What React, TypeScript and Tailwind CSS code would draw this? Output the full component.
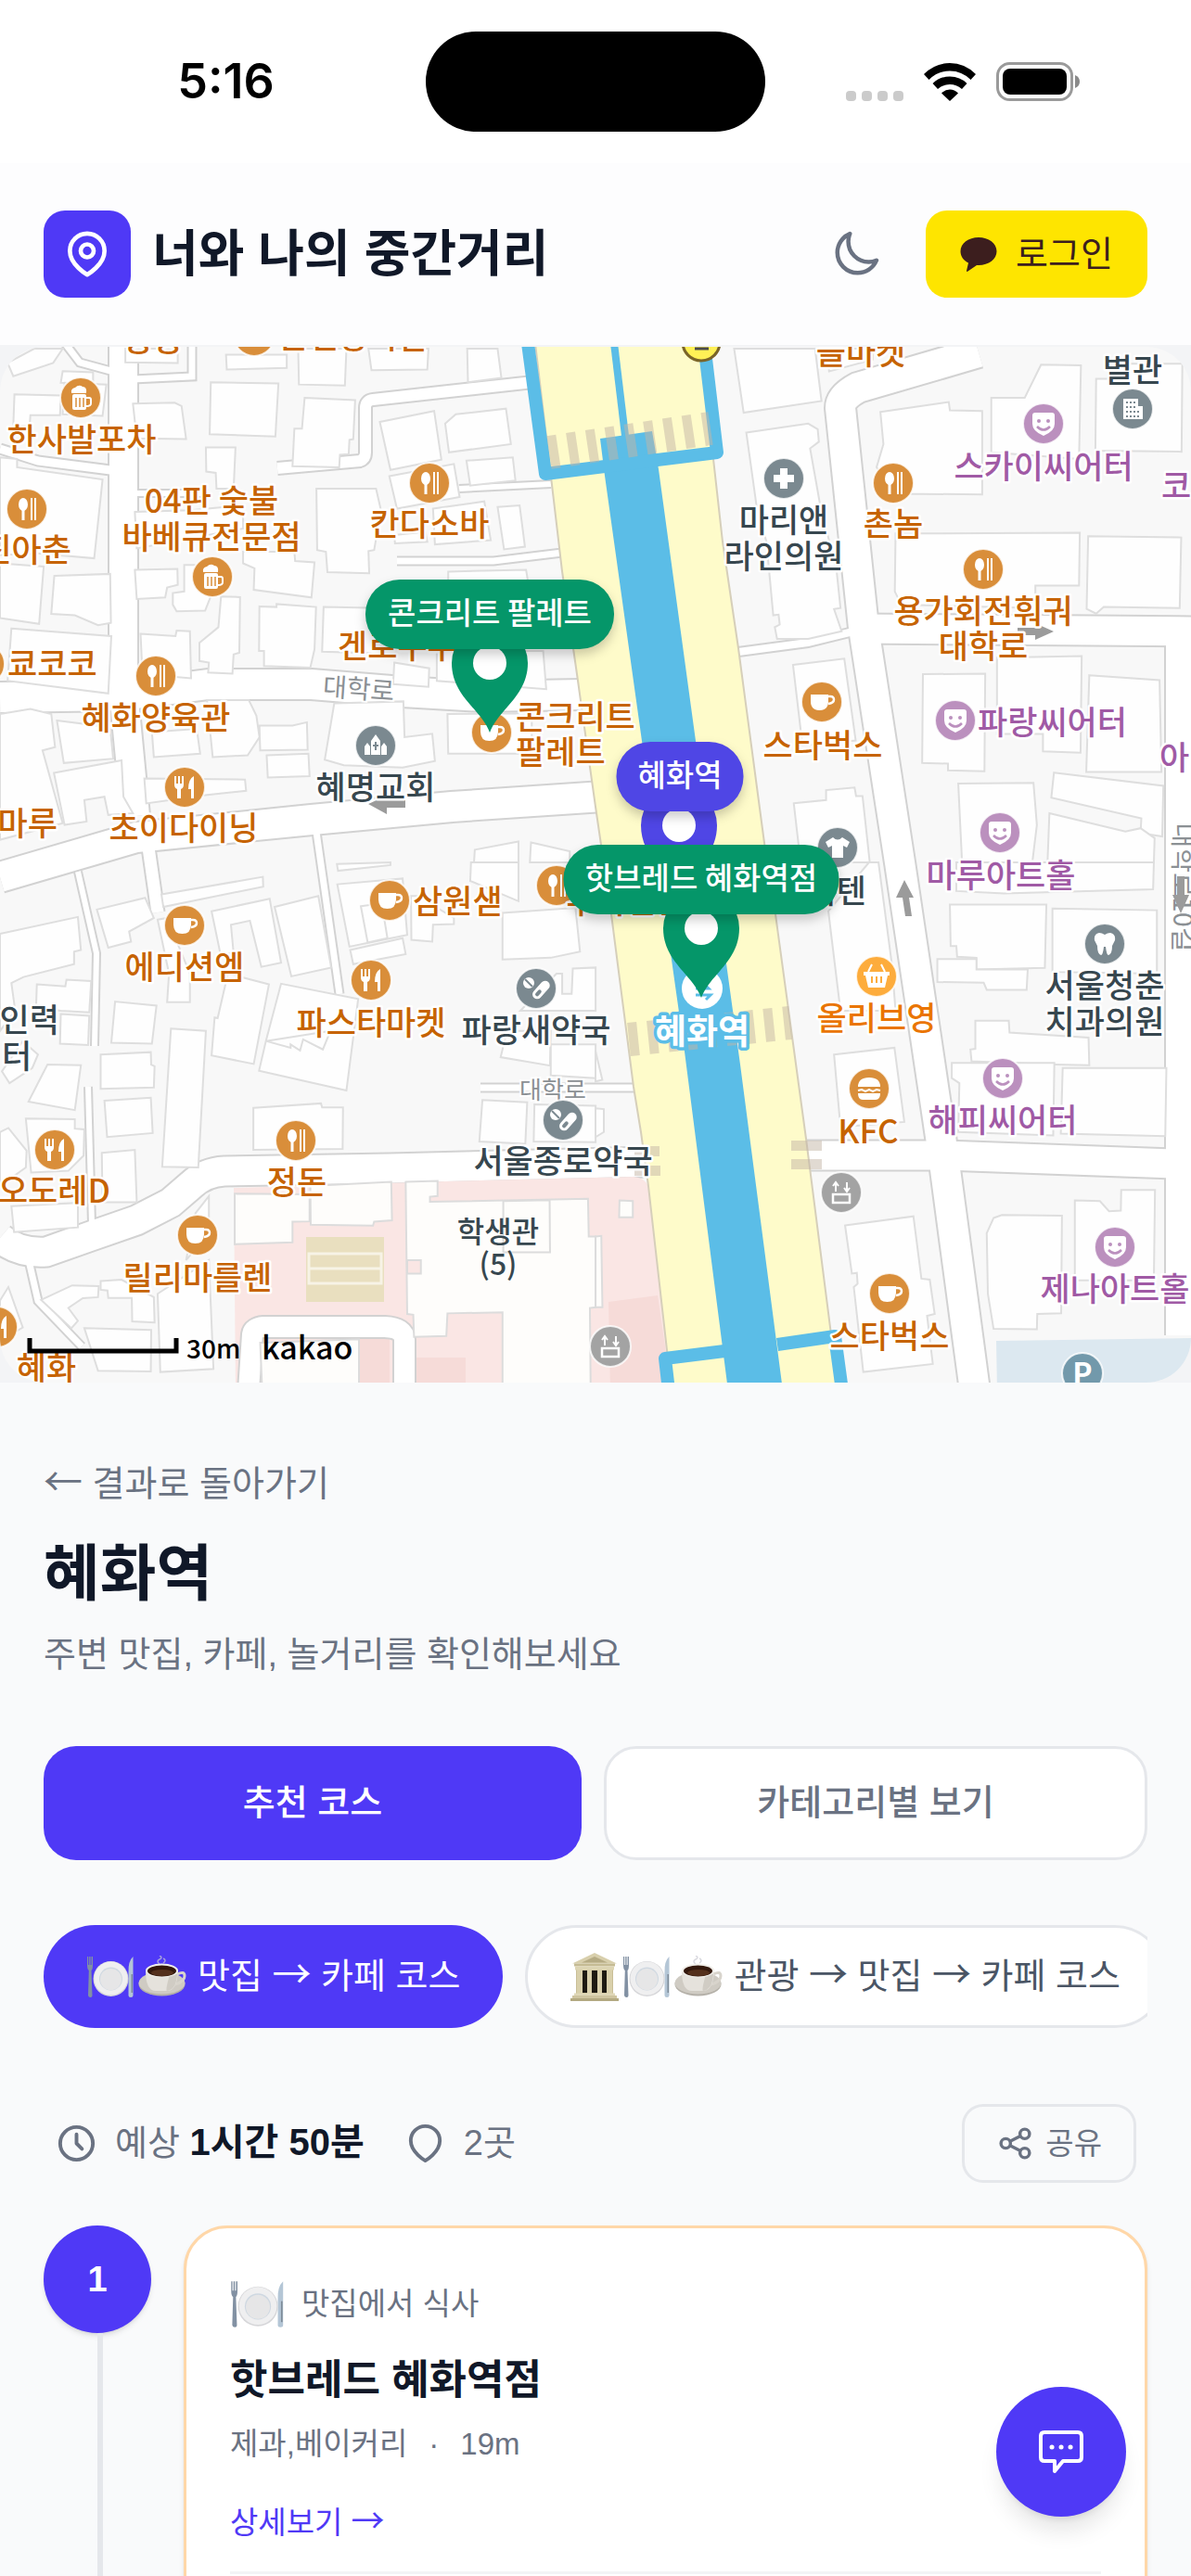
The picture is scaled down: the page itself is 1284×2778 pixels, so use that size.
import { useState } from "react"
import type { ReactNode } from "react"

type PoiKind =
  | "spoon"
  | "fork"
  | "beer"
  | "cup"
  | "mask"
  | "church"
  | "building"
  | "cross"
  | "shirt"
  | "pill"
  | "tooth"
  | "basket"
  | "burger"
  | "parking"
  | "lift"

const POI_COLORS: Record<PoiKind, string> = {
  spoon: "#d98e3a",
  fork: "#d98e3a",
  beer: "#d98e3a",
  cup: "#d98e3a",
  burger: "#d98e3a",
  basket: "#fdac3c",
  mask: "#bb90be",
  church: "#7b8990",
  building: "#7b8990",
  cross: "#7b8990",
  shirt: "#7b8990",
  pill: "#7b8990",
  tooth: "#7b8990",
  parking: "#7299ab",
  lift: "#a3a3a3",
}

const POIS: [PoiKind, number, number][] = [
  ["spoon", 274, 362],
  ["beer", 87, 429],
  ["spoon", 29, 549],
  ["beer", 229, 622],
  ["spoon", 463, 521],
  ["cup", -17, 716],
  ["spoon", 168, 729],
  ["church", 405, 804],
  ["fork", 199, 849],
  ["cup", 530, 790],
  ["mask", 1125, 457],
  ["building", 1221, 441],
  ["cross", 845, 516],
  ["spoon", 963, 521],
  ["spoon", 1060, 614],
  ["cup", 886, 757],
  ["mask", 1030, 777],
  ["mask", 1078, 898],
  ["shirt", 903, 914],
  ["cup", 199, 998],
  ["cup", 420, 971],
  ["spoon", 600, 955],
  ["fork", 400, 1057],
  ["pill", 578, 1066],
  ["pill", 607, 1208],
  ["fork", 59, 1240],
  ["spoon", 319, 1230],
  ["cup", 213, 1332],
  ["fork", -3, 1431],
  ["lift", 658, 1452],
  ["lift", 907, 1286],
  ["tooth", 1191, 1018],
  ["basket", 945, 1053],
  ["burger", 937, 1174],
  ["mask", 1081, 1163],
  ["mask", 1202, 1345],
  ["cup", 959, 1395],
  ["parking", 1167, 1481],
]

type LabelTone = "food" | "art" | "place" | "shop"
type Anchor = "start" | "middle" | "end"

const TONES: Record<LabelTone, string> = {
  food: "#c66300",
  art: "#a05aa5",
  place: "#37474f",
  shop: "#ea7500",
}

const LABELS: [string, number, number, LabelTone, Anchor][] = [
  ["성성", 164, 366, "food", "middle"],
  ["순천왕족발", 381, 363, "food", "middle"],
  ["한사발포차", 88, 474, "food", "middle"],
  ["진아춘", 77, 593, "food", "end"],
  ["04판 숯불", 228, 540, "food", "middle"],
  ["바베큐전문점", 228, 579, "food", "middle"],
  ["칸다소바", 463, 565, "food", "middle"],
  ["쿄코코", 8, 716, "food", "start"],
  ["혜화양육관", 168, 774, "food", "middle"],
  ["겐로쿠우", 364, 697, "food", "start"],
  ["혜명교회", 405, 849, "place", "middle"],
  ["초이다이닝", 198, 893, "food", "middle"],
  ["마루", 62, 888, "food", "end"],
  ["콘크리트", 556, 773, "food", "start"],
  ["팔레트", 556, 811, "food", "start"],
  ["들마켓", 928, 380, "food", "middle"],
  ["스카이씨어터", 1125, 503, "art", "middle"],
  ["별관", 1221, 399, "place", "middle"],
  ["마리앤", 845, 561, "place", "middle"],
  ["라인의원", 845, 600, "place", "middle"],
  ["촌놈", 963, 565, "food", "middle"],
  ["용가회전훠궈", 1060, 659, "food", "middle"],
  ["대학로", 1060, 697, "food", "middle"],
  ["코", 1252, 524, "art", "start"],
  ["스타벅스", 887, 804, "food", "middle"],
  ["파랑씨어터", 1054, 779, "art", "start"],
  ["아", 1250, 817, "art", "start"],
  ["마루아트홀", 1079, 944, "art", "middle"],
  ["텐바이텐", 934, 961, "place", "end"],
  ["에디션엠", 199, 1043, "food", "middle"],
  ["삼원샏", 445, 972, "food", "start"],
  ["우육면관", 675, 972, "food", "middle"],
  ["파스타마켓", 400, 1103, "food", "middle"],
  ["파랑새약국", 578, 1111, "place", "middle"],
  ["인력", 64, 1100, "place", "end"],
  ["터", 2, 1139, "place", "start"],
  ["서울종로약국", 607, 1252, "place", "middle"],
  ["오도레D", 119, 1284, "food", "end"],
  ["정돈", 320, 1275, "food", "middle"],
  ["릴리마를렌", 213, 1378, "food", "middle"],
  ["혜화", 50, 1475, "food", "middle"],
  ["서울청춘", 1191, 1063, "place", "middle"],
  ["치과의원", 1191, 1102, "place", "middle"],
  ["올리브영", 945, 1098, "shop", "middle"],
  ["KFC", 936, 1220, "food", "middle"],
  ["해피씨어터", 1081, 1208, "art", "middle"],
  ["제나아트홀", 1202, 1390, "art", "middle"],
  ["스타벅스", 959, 1441, "food", "middle"],
]

// [path, width]
const ROADS: [string, number][] = [
  ["M133 370V745L146 880", 30],
  ["M0 752L130 750L225 738L336 738L434 746L520 751L626 749", 32],
  ["M0 946L147 903L336 884L487 870L650 859", 32],
  ["M299 505L388 497Q394 495 394 488V440Q394 432 402 431L575 412", 12],
  ["M207 370V406L143 409", 7],
  ["M70 370L86 391L123 401", 7],
  ["M0 484L41 497L119 507", 9],
  ["M147 532H225", 6],
  ["M495 527L594 522", 6],
  ["M428 605H532L606 596", 7],
  ["M1055 380L925 418Q906 428 906 440L931 677L970 930L1017 1246L1051 1500", 32],
  ["M926 678L1290 681", 31],
  ["M1273 690V1440", 32],
  ["M865 1246H1019L1290 1256", 31],
  ["M796 703L871 693L920 681", 8],
  ["M700 1253L420 1260L242 1263Q221 1264 206 1278L184 1297L147 1316L98 1333L50 1350Q20 1352 0 1335", 31],
  ["M84 940L104 1028L102 1128", 6],
  ["M95 1172L99 1320", 6],
  ["M158 900L170 984", 13],
  ["M340 890L366 1072", 7],
  ["M518 1173H686", 7],
  ["M30 1355L41 1403L88 1452", 7],
]

// Each tile keeps its own grid; buildings are listed in tile units
const TILES: { transform: string; buildings: string[] }[] = [
  {
    transform: "translate(0 370) scale(.4095 .3571)",
    buildings: [
      "20,60 90,17 165,17 140,60 35,100",
      "165,85 245,88 245,122 160,120",
      "38,155 160,158 158,218 80,218 78,250 35,250",
      "170,120 280,125 270,220 165,215",
      "350,183 460,180 478,190 490,290 360,288",
      "330,17 468,17 468,60 330,58",
      "555,118 733,122 725,282 552,275",
      "802,165 935,172 930,290 920,292 918,335 895,337 893,375 770,372 775,258 795,258",
      "595,35 755,35 755,75 597,80",
      "785,17 912,17 908,128 787,125",
      "970,17 1128,17 1125,80 978,82",
      "1230,17 1310,17 1320,105 1232,118",
      "1000,238 1143,205 1162,352 1028,383",
      "1172,243 1200,215 1332,198 1345,305 1182,330",
      "1228,355 1350,345 1357,415 1238,430",
      "1025,402 1195,365 1210,465 1045,500",
      "1140,500 1275,478 1292,595 1145,608",
      "1310,495 1368,490 1382,615 1327,623",
      "1038,580 1120,570 1125,600 1040,605",
      "833,440 990,440 1003,505 985,625 970,628 972,695 862,692 858,630 835,625",
      "542,315 620,315 615,440 570,440 568,392 543,388",
      "0,345 45,350 45,375 270,412 248,650 100,635 0,640",
      "0,665 115,675 103,848 0,830",
      "143,703 290,697 292,845 258,852 197,822 135,818",
      "30,862 293,885 285,1058 20,1020",
      "355,510 500,505 640,490 640,560 360,620",
      "355,685 467,682 468,730 440,738 435,768 360,773",
      "640,630 775,630 777,658 828,662 820,768 668,745 670,680 640,665",
      "485,670 560,670 560,750 540,808 465,810 455,790 455,755 485,750",
      "582,765 632,767 630,935 615,940 612,998 548,995 550,965 525,960 525,905 575,858",
      "683,795 728,797 728,788 832,797 828,925 817,980 695,975 695,930 682,930",
      "852,797 1000,800 1000,937 848,932",
      "1180,690 1385,685 1390,720 1180,720",
      "370,878 462,885 465,868 500,870 503,1012 375,1000",
      "0,1120 80,1105 135,1120 145,1220 112,1230 165,1450 0,1500",
      "150,1140 290,1160 298,1255 168,1268",
      "142,1298 320,1260 325,1370 350,1420 285,1425 275,1370 222,1380 228,1445 170,1455",
      "400,1175 518,1165 527,1240 405,1250",
      "545,1078 655,1078 675,1125 683,1190 652,1245 560,1250",
      "683,1155 770,1155 808,1145 810,1228 685,1230",
      "702,1245 812,1240 815,1308 705,1312",
      "380,1315 645,1318 648,1352 540,1365 385,1390",
      "880,1088 1062,1082 1065,1190 1138,1180 1145,1262 1060,1282 905,1275 855,1258",
      "1178,1120 1400,1118 1400,1240 1180,1240",
      "1038,965 1130,982 1128,1038 1035,1030",
      "1150,930 1430,930 1438,1045 1150,1020",
      "1250,1530 1365,1505 1365,1568 1248,1568",
      "1398,1508 1500,1535 1500,1568 1395,1568",
    ],
  },
  {
    transform: "translate(642 370) scale(.4095 .3571)",
    buildings: [
      "365,17 578,17 595,175 390,210",
      "397,270 560,243 585,260 588,298 565,318 590,480 635,690 645,800 628,803 648,870 560,893 478,893 472,858 485,850 482,820 468,822 450,600 425,500",
      "610,17 730,17 730,50 615,85",
      "750,208 930,178 933,203 1018,205 1018,457 790,455 740,375 758,305",
      "1042,165 1130,165 1173,65 1278,67 1273,350 1042,330",
      "1318,108 1350,108 1350,62 1545,62 1543,328 1316,325",
      "790,575 1275,573 1273,732 1158,732 1158,800 805,790 788,750",
      "1297,583 1542,587 1538,800 1338,797 1318,817 1293,803",
      "520,972 655,953 685,1200 545,1215",
      "862,1000 1026,998 1024,1293 928,1290 928,1270 860,1268",
      "1057,950 1280,945 1277,1237 1178,1233 1178,1180 1057,1180",
      "1300,1003 1485,1018 1490,1295 1292,1295",
      "1207,1297 1495,1337 1492,1490 1435,1480 1437,1435 1200,1373",
      "1195,1420 1395,1475 1435,1465 1472,1495 1470,1568 1190,1568",
      "955,1330 1153,1328 1162,1455 1150,1568 965,1568",
      "522,1390 607,1380 607,1350 682,1342 686,1368 703,1368 722,1568 540,1568",
    ],
  },
  {
    transform: "translate(0 930) scale(.4095 .3635)",
    buildings: [
      "0,212 205,162 213,260 195,265 195,302 62,340 30,358 40,440 0,500",
      "97,362 172,368 175,348 240,352 235,445 160,440 95,430",
      "160,450 235,455 232,542 158,538",
      "5,620 60,530 100,570 85,610 25,655",
      "125,600 213,602 197,735 75,710",
      "68,760 197,762 197,790 222,792 220,870 180,915 82,920",
      "0,800 22,788 70,855 68,905 0,960",
      "30,1020 205,1010 205,1083 37,1097",
      "268,862 355,853 360,1008 270,1008",
      "255,140 382,105 405,165 340,205 345,235 285,253",
      "425,95 692,43 693,72 430,132",
      "303,413 412,425 400,538 293,535",
      "265,570 397,563 398,600 407,605 405,668 265,672",
      "275,707 397,698 402,803 282,815",
      "450,493 542,500 522,905 427,903",
      "415,170 440,165 500,330 500,415 440,415 445,330",
      "557,145 710,108 740,298 688,310 658,173 608,185 615,270 580,270",
      "723,132 838,100 872,312 767,338",
      "600,330 708,362 668,598 557,573 565,460 573,462",
      "740,360 943,405 912,677 682,618 700,530",
      "700,530 765,550 765,540 790,558 798,525 850,555 870,500",
      "888,65 1060,48 1072,215 920,250",
      "950,130 1005,122 1020,225 968,238",
      "922,260 1060,225 1068,272 930,302",
      "887,5 1028,0 1028,8 890,25",
      "1082,100 1100,100 1195,165 1195,183 1140,185 1138,235 1083,230",
      "1240,0 1365,0 1365,115 1238,55",
      "1323,150 1515,135 1527,265 1450,283 1323,288",
      "1465,330 1480,330 1480,390 1505,390 1508,315 1568,312 1568,440 1370,440",
      "1335,500 1450,500 1448,603 1318,578",
      "1450,540 1568,540 1568,640 1450,632",
      "1270,705 1388,712 1383,835 1262,828",
      "1407,718 1568,722 1568,830 1405,828",
      "667,728 845,715 848,727 903,727 902,850 667,853",
      "515,1040 550,990 550,1100 490,1180",
      "0,1300 22,1260 60,1380 0,1420",
      "108,1298 190,1255 260,1257 258,1290 218,1293 180,1322 205,1360 188,1382",
      "265,1242 320,1238 405,1290 407,1365 348,1362 347,1292 285,1292 283,1270 265,1268",
      "222,1382 398,1387 397,1510 258,1508",
      "415,1280 550,1180 562,1503 422,1512",
    ],
  },
  {
    transform: "translate(642 930) scale(.4095 .3635)",
    buildings: [
      "0,730 22,732 22,800 0,815",
      "0,560 18,645 0,650",
      "613,145 720,0 745,0 780,300 790,440 645,440",
      "628,570 787,550 813,770 645,785",
      "657,1077 837,1050 858,1235 880,1238 893,1340 873,1345 888,1488 705,1512 680,1260 690,1250 688,1218 675,1220",
      "950,0 1470,0 1468,80 1075,92 950,85",
      "933,125 1187,125 1183,313 1003,318 1003,283 952,280 950,248 935,248",
      "900,287 1003,287 1003,318 1138,318 1135,378 1030,378 1022,357 900,355",
      "1203,137 1478,142 1478,330 1203,325",
      "1000,470 1088,470 1090,505 1298,520 1300,602 1210,600 990,590 987,555 1000,553",
      "938,595 1208,595 1205,810 955,800 958,655 938,640",
      "1230,610 1503,610 1500,812 1225,805",
      "1048,1055 1070,1046 1228,1048 1226,1338 1163,1340 1162,1385 1048,1384 1033,1280 1030,1100",
      "1262,1003 1328,1005 1352,1035 1383,1033 1384,972 1473,972 1470,1240 1262,1240",
    ],
  },
]

const CAMPUS_BUILDINGS = [
  "618,983 815,985 815,1065 770,1066 770,1127 618,1133",
  "817,960 1030,948 1032,1062 985,1066 982,1078 818,1075",
  "1068,948 1152,945 1152,990 1132,992 1132,1007 1548,998 1550,1110 1568,1110 1568,1320 1553,1322 1555,1560 1323,1560 1323,1335 1178,1338 1175,1405 1090,1408 1088,1342 1072,1340",
  "1325,1005 1447,1002 1448,1157 1325,1157",
  "685,1425 945,1415 945,1560 690,1560",
  "1568,1110 1583,1108 1586,1320 1568,1320",
  "1631,1003 1666,1005 1666,1053 1630,1053",
]

function PoiGlyph({ kind }: { kind: PoiKind }) {
  switch (kind) {
    case "spoon":
      return (
        <g fill="#fff">
          <ellipse cx="-4" cy="-5" rx="5" ry="7" />
          <path d="M-5.500 0h3v12h-3zM4 -12h2v24h-2zM8 -12h2v24h-2z" />
        </g>
      )
    case "fork":
      return (
        <path
          fill="#fff"
          d="M-11 -12h2v8h2v-8h2v8h2v-8h2v9q0 4-3 5v10h-4V2q-3-1-3-5zM10 -12v24h-3V2H4q0-11 6-14z"
        />
      )
    case "beer":
      return (
        <g>
          <path fill="#fff" d="M-10 -5q-1-5 4-6q4-4 8-1q5 0 4 7z" />
          <rect x="-9" y="-4" width="15" height="17" rx="2" fill="#fff" />
          <path d="M6 0h3q2 0 2 2v4q0 3-5 3" fill="none" stroke="#fff" strokeWidth="2" />
          <path d="M-5 0v10M-1 0v10M3 0v10" stroke="#d98e3a" strokeWidth="1.500" />
        </g>
      )
    case "cup":
      return (
        <g>
          <path fill="#fff" d="M-12 -8H7V-1Q7 9-2.500 9T-12-1z" />
          <path d="M7 -6h2q4 0 4 3.500T7 2" fill="none" stroke="#fff" strokeWidth="2.500" />
        </g>
      )
    case "mask":
      return (
        <g>
          <path fill="#fff" d="M-9 -12H9q3 0 3 3V0Q12 8 0 13Q-12 8-12 0v-9q0-3 3-3z" />
          <circle cx="-5" cy="-3" r="2" fill="#bb90be" />
          <circle cx="5" cy="-3" r="2" fill="#bb90be" />
          <path d="M-7 3Q0 10 7 3" fill="none" stroke="#bb90be" strokeWidth="2.500" />
        </g>
      )
    case "church":
      return (
        <g>
          <path fill="#fff" d="M-12 10V1l3-4 3 4v9zM12 10V1l-3-4-3 4v9zM-5 10V-5L0-12l5 7V10z" />
          <path d="M0 -4v9M-3 0h6" stroke="#7b8990" strokeWidth="2" />
        </g>
      )
    case "building":
      return (
        <g>
          <path fill="#fff" d="M-10 -11H6v8h5v14h-21z" />
          <path d="M-7 -7H4M-7 -2H4M-7 3H9M-7 8H9" stroke="#7b8990" strokeWidth="2" strokeDasharray="2 2" />
        </g>
      )
    case "cross":
      return <path fill="#fff" d="M-4 -11h8v7h7v8H4v7h-8V4h-7v-8h7z" />
    case "shirt":
      return <path fill="#fff" d="M-5 -11Q0 -6 5 -11L13 -6 10 0 6 -2V11H-6V-2L-10 0-13 -6z" />
    case "pill":
      return (
        <g>
          <circle cx="-8" cy="-6" r="6" fill="#fff" />
          <path d="M-12 -10l8 8" stroke="#7b8990" strokeWidth="2" />
          <g transform="rotate(-48)">
            <rect x="-9" y="0" width="23" height="10" rx="5" fill="#fff" />
            <rect x="-6" y="3" width="8" height="4" rx="2" fill="#7b8990" />
          </g>
        </g>
      )
    case "tooth":
      return (
        <path
          fill="#fff"
          d="M-6 -12Q-3 -12 0 -10Q3 -12 6 -12Q12 -11 11 -4L8 2Q8 11 4 12Q2 12 1 3H-1Q-2 12-4 12Q-8 11-8 2L-11-4Q-12-11-6-12z"
        />
      )
    case "basket":
      return (
        <g>
          <path fill="#fff" d="M-14 -5H14V-1H12L9 12H-9L-12 -1H-14z" />
          <path d="M-5 -13L-9 -5M5 -13L9 -5" stroke="#fff" strokeWidth="2" />
          <path d="M-5 0v7M0 0v7M5 0v7" stroke="#fdac3c" strokeWidth="2" />
        </g>
      )
    case "burger":
      return (
        <g fill="#fff">
          <path d="M-12 -2Q-12 -12 0 -12T12 -2z" />
          <path d="M-12 2l4-1 4 2 4-2 4 2 4-2 4 1" fill="none" stroke="#fff" strokeWidth="2" />
          <path d="M-12 5H12Q12 12 7 12H-7Q-12 12-12 5z" />
        </g>
      )
    case "parking":
      return (
        <text y="12" textAnchor="middle" fontSize="32" fontWeight="700" fill="#fff">
          P
        </text>
      )
    case "lift":
      return (
        <g fill="none" stroke="#fff" strokeWidth="2.500">
          <rect x="-9" y="2" width="18" height="9" />
          <path d="M-6 -1V-10M-9 -7l3-4 3 4M6 -11v9M3 -5l3 4 3-4" strokeWidth="2" />
        </g>
      )
  }
}

function Pin({ x, y, color }: { x: number; y: number; color: string }) {
  return (
    <g transform={`translate(${x} ${y})`}>
      <path d="M0 75C-9 50-41 36-41 0A41 41 0 0 1 41 0C41 36 9 50 0 75z" fill={color} />
      <circle r="18" fill="#fff" />
    </g>
  )
}

function Bubble({ x, y, width, color, children }: { x: number; y: number; width: number; color: string; children: ReactNode }) {
  return (
    <g>
      <rect
        x={x - width / 2}
        y={y}
        width={width}
        height="75"
        rx="37"
        fill={color}
        className="drop-shadow-[0_6px_6px_rgba(0,0,0,0.2)]"
      />
      <text x={x} y={y + 48} textAnchor="middle" fontSize="33" fontWeight="500" fill="#fff">
        {children}
      </text>
    </g>
  )
}

function StationMap() {
  return (
    <svg
      viewBox="0 374 1284 1117"
      className="block w-full rounded-[48px] font-['Noto_Sans_CJK_KR',sans-serif]"
      role="img"
      aria-label="혜화역 지도"
    >
      <rect y="370" width="1284" height="1130" fill="#f8f8f8" />

      {ROADS.map(([d, w]) => (
        <path key={d} d={d} fill="none" stroke="#d2d2d2" strokeWidth={w + 4} />
      ))}
      {ROADS.map(([d, w]) => (
        <path key={d} d={d} fill="none" stroke="#fff" strokeWidth={w} />
      ))}

      <g fill="#fefefe" stroke="#dedede" strokeWidth="2">
        {TILES.map((tile) => (
          <g key={tile.transform} transform={tile.transform}>
            {tile.buildings.map((points) => (
              <polygon key={points} points={points} vectorEffect="non-scaling-stroke" />
            ))}
          </g>
        ))}
      </g>

      {/* university campus */}
      <path d="M252 1281L480 1274L683 1269Q697 1270 700 1283L724 1500H254z" fill="#fae6e4" />
      <path d="M656 1404L709 1397L724 1500H658zM447 1464h55v36h-55zM387 1444h33v56h-33z" fill="#f6dbd8" />
      <path d="M268 1500L272 1439Q273 1432 284 1431H415Q436 1432 436 1445V1500" fill="none" stroke="#d2d2d2" strokeWidth="26" />
      <path d="M268 1500L272 1439Q273 1432 284 1431H415Q436 1432 436 1445V1500" fill="none" stroke="#fff" strokeWidth="22" />
      <g transform="translate(0 930) scale(.4095 .3635)" fill="#fefdfb" stroke="#dcdcdc" strokeWidth="2">
        {CAMPUS_BUILDINGS.map((points) => (
          <polygon key={points} points={points} vectorEffect="non-scaling-stroke" />
        ))}
        <polygon points="1072,1180 1108,1180 1108,1220 1072,1220" fill="#fae6e4" vectorEffect="non-scaling-stroke" />
      </g>
      <rect x="330" y="1334" width="84" height="70" fill="#e9dfbf" />
      <path d="M333 1352H411V1384H333zM333 1368H411" fill="none" stroke="#f7f3e6" strokeWidth="3" />

      <path d="M1074 1446L1284 1443V1500H1075z" fill="#dce8f0" />

      {/* main street and subway line */}
      <path
        d="M577 370L606 616L622 727L642 870L659 986L683 1172L691 1221L699 1279L724 1500H902L896 1439L869 1228L836 986L824 909L796 699L779 584L755 370z"
        fill="#fefbca"
        stroke="#d6cfba"
        strokeWidth="2"
      />
      <path d="M647 473L703 465L710 506L750 799L783 1039L798 1148L844 1500H785L738 1134L724 1035L692 799L652 513z" fill="#5bbde7" />
      <g fill="none" stroke="#5bbde7" strokeWidth="14" strokeLinejoin="round">
        <path d="M569 370L588 511L773 488L759 370" />
        <path d="M721 1500L717 1465L781 1457M838 1450L900 1441L908 1500" />
        <path d="M662 370L674 470" strokeWidth="8" />
      </g>
      <g stroke="#c3b5a6" strokeOpacity=".5" strokeWidth="36" strokeDasharray="10 11">
        <path d="M592 488L766 462" />
        <path d="M678 1121L852 1103" />
      </g>
      <path d="M853 1230h33v11h-33zM853 1250h33v11h-33zM684 1236h27v11h-27zM684 1257h28v11h-28z" fill="#c3b5a6" fillOpacity=".5" />
      <circle cx="756" cy="369" r="20" fill="#fff056" stroke="#7a6428" strokeWidth="3" />
      <path d="M749 376H764" stroke="#4a4a4a" strokeWidth="3" />

      <g fill="#8b9094" stroke="#fff" strokeWidth="4" paintOrder="stroke" textAnchor="middle">
        <text transform="translate(386 753) rotate(4)" fontSize="28">
          대학로
        </text>
        <text x="596" y="1185" fontSize="26">
          대학로
        </text>
        <text transform="translate(1265 957) rotate(90)" fontSize="29">
          대학로10길
        </text>
      </g>

      <g fill="#9b9b9b">
        <path d="M397 867l20-9v5h20v8h-20v7z" />
        <path d="M1136 681l-20-9v5h-19v8h19v5z" />
        <path d="M975 949l10 19h-5l3 20h-7l-3-20h-7z" />
        <path d="M1273 985l9-20h-5v-20h-8v20h-5z" />
      </g>

      {POIS.map(([kind, x, y]) => (
        <g key={`${kind}-${x}-${y}`} transform={`translate(${x} ${y})`}>
          <circle r="22" fill={POI_COLORS[kind]} stroke="#fff" strokeOpacity=".8" strokeWidth="2" />
          <PoiGlyph kind={kind} />
        </g>
      ))}

      {LABELS.map(([name, x, y, tone, anchor]) => (
        <text
          key={`${name}-${x}-${y}`}
          x={x}
          y={y + 13}
          textAnchor={anchor}
          fontSize="35"
          fontWeight="500"
          fill={TONES[tone]}
          stroke="#fff"
          strokeWidth="5"
          strokeLinejoin="round"
          paintOrder="stroke"
        >
          {name}
        </text>
      ))}
      <g fontSize="32" fontWeight="500" fill="#37474f" textAnchor="middle">
        <text x="537" y="1340">
          학생관
        </text>
        <text x="537" y="1375">
          (5)
        </text>
      </g>

      <circle cx="757" cy="1066" r="22" fill="#fff" />
      <path d="M750 1066h14l-5-5m-9 12h16l-5 5" fill="none" stroke="#5bbde7" strokeWidth="3" />
      <text
        x="757"
        y="1126"
        textAnchor="middle"
        fontSize="37"
        fontWeight="700"
        fill="#fff"
        stroke="#5bbde7"
        strokeWidth="7"
        strokeLinejoin="round"
        paintOrder="stroke"
      >
        혜화역
      </text>

      <Pin x={528} y={715} color="#059669" />
      <Bubble x={528} y={625} width={268} color="#059669">
        콘크리트 팔레트
      </Bubble>
      <Pin x={732} y={890} color="#4f46e5" />
      <Bubble x={733} y={800} width={137} color="#4f46e5">
        혜화역
      </Bubble>
      <Pin x={756} y={1001} color="#059669" />
      <Bubble x={756} y={911} width={297} color="#059669">
        핫브레드 혜화역점
      </Bubble>

      <path d="M32 1443V1457H190V1443" fill="none" stroke="#000" strokeWidth="5" />
      <text x="201" y="1465" fontSize="28" fontWeight="500">
        30m
      </text>
      <text x="282" y="1466" fontSize="34" fontWeight="500">
        kakao
      </text>
    </svg>
  )
}

function PlateIcon({ className }: { className: string }) {
  return (
    <svg viewBox="0 0 52 46" className={className} aria-hidden="true">
      <path d="M1 1h1.200v9h1V1h1.400v9h1V1H7v9q0 5-1.500 6L6.500 43Q6.500 45 4.500 45T2 43L2.800 16Q1 15 1 10z" fill="#8291a3" />
      <path d="M50.500 1V43q0 2-2.500 2t-2.500-2V18Q45 6 50.500 1z" fill="#b4c6d6" />
      <path d="M48.500 20h1.500v20h-1.500z" fill="#7f8c99" />
      <circle cx="26.500" cy="25" r="19" fill="#d6d6d9" />
      <circle cx="26.500" cy="24.500" r="18" fill="#efeff0" />
      <circle cx="26.500" cy="25" r="12.500" fill="#cfd8e1" />
      <circle cx="26.500" cy="25.500" r="11.500" fill="#e6e6e7" />
    </svg>
  )
}

function CoffeeIcon({ className }: { className: string }) {
  return (
    <svg viewBox="0 0 52 46" className={className} aria-hidden="true">
      <path d="M23 9q-4-3 0-5t0-4M27 8q4-3 0-5" fill="none" stroke="#c9c9d2" strokeWidth="1.500" opacity=".7" />
      <ellipse cx="25.500" cy="31" rx="25" ry="12.500" fill="#b4b0a8" />
      <ellipse cx="25.500" cy="29.500" rx="25" ry="12" fill="#cfcbc3" />
      <path d="M42 20q8-4 8 2T40 31" fill="none" stroke="#d8d4cc" strokeWidth="3" />
      <path d="M8 16q0 22 11 22h12q11 0 12-22z" fill="#e5e2dc" />
      <path d="M34 20h8q-1 17-11 18-2 0 3-18z" fill="#d0ccc4" />
      <ellipse cx="25.500" cy="16" rx="17.500" ry="7.500" fill="#f1efea" />
      <ellipse cx="25.500" cy="16.500" rx="15.500" ry="6" fill="#33180c" />
      <ellipse cx="26" cy="18.500" rx="12" ry="3.500" fill="#54301c" />
    </svg>
  )
}

function TempleIcon({ className }: { className: string }) {
  return (
    <svg viewBox="0 0 52 52" className={className} aria-hidden="true">
      <path d="M6 16h40v28H6z" fill="#c9bf97" />
      <path d="M13 19h6v24h-6zM23 19h6v24h-6zM33 19h6v24h-6z" fill="#1e1a12" />
      <path d="M7 18h6v26H7zM18 18h5v26h-5zM29 18h5v26h-5zM39 18h6v26h-6z" fill="#d9d0ab" />
      <path d="M26 0L50 11.500H2z" fill="#d8cfac" />
      <path d="M26 4L40 10.500H12z" fill="#b5ab84" />
      <path d="M4 11.500h44v3H4z" fill="#c5bb93" />
      <path d="M5 14.500h42v4H5z" fill="#ddd5b3" />
      <path d="M4 43.500h44V46H4z" fill="#e0d8b8" />
      <path d="M2 46h48v3H2z" fill="#cfc5a0" />
      <path d="M0 49h52v3H0z" fill="#b3a981" />
    </svg>
  )
}

function Arrow({ children = "→", className = "text-[42px]" }: { children?: ReactNode; className?: string }) {
  return <span className={`font-['Noto_Sans_CJK_KR',sans-serif] leading-none ${className}`}>{children}</span>
}

function StatusBar() {
  return (
    <div className="grid h-[176px] grid-cols-[1fr_366px_1fr] items-center bg-white text-black">
      <span className="pl-7 text-center font-['Inter',sans-serif] text-[52px] font-semibold">5:16</span>
      <div className="h-[108px] rounded-full bg-black" />
      <div className="flex items-center justify-center gap-[22px] pr-8">
        <div className="flex gap-[6px] self-end">
          <i className="size-[11px] rounded bg-[#cbcbcb]" />
          <i className="size-[11px] rounded bg-[#cbcbcb]" />
          <i className="size-[11px] rounded bg-[#cbcbcb]" />
          <i className="size-[11px] rounded bg-[#cbcbcb]" />
        </div>
        <svg viewBox="0 0 56 41" className="h-[41px] w-[56px]" aria-hidden="true">
          <path d="M0 12Q12 0 28 0T56 12L50.500 18Q41 8.500 28 8.500T5.500 18z" />
          <path d="M9.500 22Q17 14.500 28 14.500T46.500 22L41 28Q35 23 28 23T15 28z" />
          <path d="M19 32.500Q23 28.500 28 28.500T37 32.500L28 41z" />
        </svg>
        <svg viewBox="0 0 91 42" className="h-[42px] w-[91px]" aria-hidden="true">
          <rect x="1.500" y="1.500" width="80" height="39" rx="13" fill="none" stroke="#9a9a9a" strokeWidth="3" />
          <rect x="7" y="7" width="69" height="28" rx="8" />
          <path d="M85 14q5 2 5 7t-5 7z" fill="#8a8a8a" />
        </svg>
      </div>
    </div>
  )
}

function Header() {
  return (
    <header className="flex h-[198px] items-center justify-between border-b-2 border-gray-100 bg-[#fdfdfe] px-[47px]">
      <a href="#" className="flex items-center gap-[23px]">
        <span className="flex size-[94px] items-center justify-center rounded-[23px] bg-[#4f39f6]">
          <svg viewBox="0 0 24 24" className="size-[56px] fill-none stroke-white stroke-2" aria-hidden="true">
            <path d="M20 10.500C20 17 12 21.500 12 21.500S4 17 4 10.500a8 8 0 1 1 16 0z" strokeLinejoin="round" />
            <circle cx="12" cy="10.500" r="3" />
          </svg>
        </span>
        <span className="text-[54px] font-bold">너와 나의 중간거리</span>
      </a>
      <div className="flex items-center gap-7">
        <button type="button" aria-label="다크 모드" className="flex size-[94px] items-center justify-center text-gray-500">
          <svg viewBox="0 0 24 24" className="size-[54px] fill-none stroke-current stroke-2" strokeLinejoin="round" aria-hidden="true">
            <path d="M21.752 15.002A9.720 9.720 0 0 1 18 15.750c-5.385 0-9.750-4.365-9.750-9.750 0-1.330.266-2.597.748-3.752A9.753 9.753 0 0 0 3 11.250C3 16.635 7.365 21 12.750 21a9.753 9.753 0 0 0 9.002-5.998Z" />
          </svg>
        </button>
        <button
          type="button"
          className="flex h-[94px] items-center gap-5 rounded-[23px] bg-[#fee500] px-[37px] text-[38px] text-[#3c1e1e]"
        >
          <svg viewBox="0 0 40 37" className="h-[37px] w-[40px]" aria-hidden="true">
            <path d="M20 0C9 0 .500 6.500.500 15 .500 20.500 4 25 9 27.500L7 36q0 1.500 1.500.500L18 30h2c11 0 19.500-6.500 19.500-15S31 0 20 0z" fill="#3c1e1e" />
          </svg>
          로그인
        </button>
      </div>
    </header>
  )
}

type Tab = "course" | "category"

export default function App() {
  const [tab, setTab] = useState<Tab>("course")
  const [course, setCourse] = useState(0)

  const tabClass = (active: boolean) =>
    active
      ? "h-[123px] flex-1 rounded-[35px] bg-[#4f39f6] font-medium text-white"
      : "h-[123px] flex-1 rounded-[35px] border-[3px] border-gray-200 bg-white font-medium text-gray-500"

  const chipClass = (active: boolean) =>
    active
      ? "flex h-[111px] shrink-0 items-center gap-3 rounded-full bg-[#4f39f6] px-[46px] text-white"
      : "flex h-[111px] shrink-0 items-center gap-3 rounded-full border-[3px] border-gray-200 bg-white px-[46px] text-gray-600"

  return (
    <div className="relative h-dvh overflow-hidden bg-gray-50 font-['Liberation_Sans','Noto_Sans_CJK_KR',sans-serif] text-[38px] text-gray-900">
      <StatusBar />
      <Header />
      <div className="bg-gray-100">
        <StationMap />
      </div>

      <main className="px-[47px] pt-[80px]">
        <a href="#" className="block leading-[58px] text-gray-500">
          <Arrow>←</Arrow> 결과로 돌아가기
        </a>
        <h1 className="mt-[26px] text-[66px] leading-[84px] font-bold">혜화역</h1>
        <p className="mt-[16px] leading-[58px] text-gray-500">주변 맛집, 카페, 놀거리를 확인해보세요</p>

        <div className="mt-[70px] flex gap-6">
          <button type="button" className={tabClass(tab === "course")} onClick={() => setTab("course")}>
            추천 코스
          </button>
          <button type="button" className={tabClass(tab === "category")} onClick={() => setTab("category")}>
            카테고리별 보기
          </button>
        </div>

        <div className="mt-[70px] flex gap-6 overflow-hidden">
          <button type="button" className={chipClass(course === 0)} onClick={() => setCourse(0)}>
            <span className="flex gap-1">
              <PlateIcon className="h-[46px] w-[52px]" />
              <CoffeeIcon className="h-[46px] w-[52px]" />
            </span>
            <span>
              맛집 <Arrow /> 카페 코스
            </span>
          </button>
          <button type="button" className={chipClass(course === 1)} onClick={() => setCourse(1)}>
            <span className="flex items-center gap-1">
              <TempleIcon className="size-[52px]" />
              <PlateIcon className="h-[46px] w-[52px]" />
              <CoffeeIcon className="h-[46px] w-[52px]" />
            </span>
            <span>
              관광 <Arrow /> 맛집 <Arrow /> 카페 코스
            </span>
          </button>
        </div>

        <div className="mt-[82px] flex items-center justify-between px-3 text-gray-500">
          <div className="flex items-center gap-[42px]">
            <span className="flex items-center gap-[18px]">
              <svg viewBox="0 0 24 24" className="size-[47px] fill-none stroke-current stroke-2" aria-hidden="true">
                <circle cx="12" cy="12" r="9" />
                <path d="M12 7v5l3 3" strokeLinecap="round" strokeLinejoin="round" />
              </svg>
              <span>
                예상 <strong className="text-[40px] leading-none text-gray-900">1시간 50분</strong>
              </span>
            </span>
            <span className="flex items-center gap-[18px]">
              <svg viewBox="0 0 24 24" className="size-[47px] fill-none stroke-current stroke-2" aria-hidden="true">
                <path d="M20 10.500C20 17 12 21.500 12 21.500S4 17 4 10.500a8 8 0 1 1 16 0z" strokeLinejoin="round" />
              </svg>
              2곳
            </span>
          </div>
          <button
            type="button"
            className="flex h-[85px] items-center gap-3 rounded-[23px] border-[3px] border-gray-200 px-[34px] text-[33px]"
          >
            <svg viewBox="0 0 24 24" className="size-[41px] fill-none stroke-current stroke-2" aria-hidden="true">
              <circle cx="6" cy="12" r="3" />
              <circle cx="18" cy="6" r="3" />
              <circle cx="18" cy="18" r="3" />
              <path d="M8.700 10.700l6.600-3.400M8.700 13.300l6.600 3.400" />
            </svg>
            공유
          </button>
        </div>

        <ol className="mt-[46px]">
          <li className="flex gap-[35px]">
            <div className="flex flex-col">
              <span className="flex size-[116px] items-center justify-center rounded-full bg-[#4f39f6] font-bold text-white shadow-md">
                1
              </span>
              <span className="ml-[50%] w-[6px] flex-1 bg-gray-200" />
            </div>
            <article className="flex-1 rounded-[47px] border-[3px] border-orange-200 bg-white px-[47px] pt-[47px] pb-20 text-[33px] shadow-md">
              <div className="flex items-center gap-[18px] leading-[70px] text-gray-500">
                <PlateIcon className="h-[52px] w-[59px]" />
                맛집에서 식사
              </div>
              <h2 className="mt-[14px] text-[44px] leading-[66px] font-bold">핫브레드 혜화역점</h2>
              <p className="mt-[12px] flex gap-[23px] leading-[48px] text-gray-500">
                제과,베이커리 <span>·</span> <span>19m</span>
              </p>
              <a href="#" className="mt-[37px] block leading-[48px] text-[#4f39f6]">
                상세보기 <Arrow className="text-[36px]" />
              </a>
              <hr className="mt-[28px] border-t-[3px] border-gray-100" />
            </article>
          </li>
        </ol>
      </main>

      <button
        type="button"
        aria-label="의견 보내기"
        className="fixed right-[70px] bottom-16 flex size-[140px] items-center justify-center rounded-full bg-[#4f39f6] shadow-xl"
      >
        <svg viewBox="0 0 50 50" className="size-[50px] fill-none stroke-white" strokeWidth="4" strokeLinejoin="round" aria-hidden="true">
          <path d="M7 4H43Q47 4 47 8V31Q47 35 43 35H27L18 46V35H7Q3 35 3 31V8Q3 4 7 4z" />
          <path d="M15 20h.1M25 20h.1M35 20h.1" strokeWidth="5" strokeLinecap="round" />
        </svg>
      </button>
    </div>
  )
}
